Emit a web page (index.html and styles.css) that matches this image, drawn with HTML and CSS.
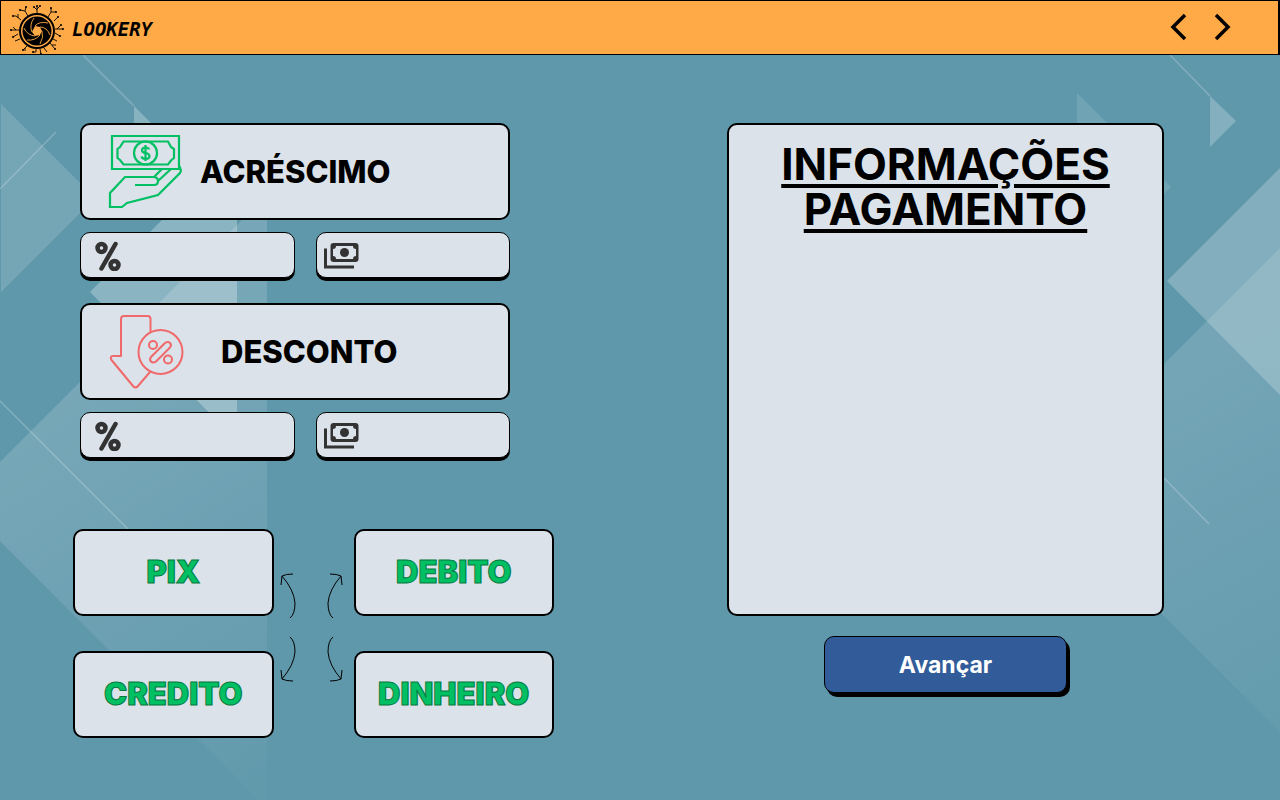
FILE: index.html
```html
<!DOCTYPE html>
<html lang="pt-BR">
<head>
<meta charset="utf-8">
<meta name="viewport" content="width=device-width, initial-scale=1">
<title>Lookery</title>
<link rel="stylesheet" href="styles.css">
</head>
<body>
<svg class="backdrop" viewBox="0 0 1280 800" preserveAspectRatio="none" aria-hidden="true">
  <defs>
    <linearGradient id="fade-left" gradientUnits="userSpaceOnUse" x1="60" y1="400" x2="290" y2="760"><stop offset="0" stop-color="#fff" stop-opacity=".15"/><stop offset="1" stop-color="#fff" stop-opacity=".02"/></linearGradient>
    <linearGradient id="fade-right" gradientUnits="userSpaceOnUse" x1="1160" y1="370" x2="1340" y2="700"><stop offset="0" stop-color="#fff" stop-opacity=".13"/><stop offset="1" stop-color="#fff" stop-opacity=".03"/></linearGradient>
  </defs>
  <g fill="#fff">
    <path d="M1 104 95 198 1 292Z" fill-opacity=".14"/>
    <path d="M134 106 158 130 134 154Z" fill-opacity=".25"/>
    <path d="M90 292 237 145V441Z" fill-opacity=".28"/>
    <path d="M0 462 267 195V800H259L0 541Z" fill="url(#fade-left)"/>
    <path d="M1077 93 1171 187 1077 281Z" fill-opacity=".11"/>
    <path d="M1210 96 1236 121 1210 147Z" fill-opacity=".23"/>
    <path d="M1167 281 1280 168V395Z" fill-opacity=".22"/>
    <path d="M1280 248 1038 490 1280 732Z" fill="url(#fade-right)"/>
  </g>
  <g stroke="#fff" stroke-opacity=".22" stroke-width="1.5">
    <path d="M83 55 134 106M0 189 56 132M0 401 128 529M1170 55 1210 96M1164 478 1209 524"/>
  </g>
</svg>

<header class="topbar">
  <a class="brand" href="#">
    <svg class="brand-mark" viewBox="0 0 56 52" aria-hidden="true">
      <g fill="none" stroke="#000" stroke-width=".9">
        <path d="M28 10V3M28 7l-3-3M28 6l3-3M19 13l-3-5-5-1M16 8l1-4M12 17 7 13H4M9 15v-4M39 14l3-5V5M42 9h5M45 18l4-4M10 27H2M7 27l-3-3M9 31l-5 3M11 36l-5 2M46 26h8M48 26l4-4M46 30l5 3M44 36l4 2M41 40l5 6M43 42h4M18 43l-4 4M16 45v3M27 46v3h-3M31 46l1 5M35 45l3 4"/>
      </g>
      <g fill="#000">
        <circle cx="28" cy="3" r="1"/><circle cx="25" cy="4" r="1"/><circle cx="31" cy="3" r="1"/><circle cx="11" cy="7" r="1"/><circle cx="17" cy="4" r="1"/><circle cx="4" cy="13" r="1"/><circle cx="42" cy="5" r="1"/><circle cx="47" cy="9" r="1"/><circle cx="49" cy="14" r="1"/><circle cx="2" cy="27" r="1"/><circle cx="4" cy="34" r="1"/><circle cx="54" cy="26" r="1"/><circle cx="52" cy="22" r="1"/><circle cx="51" cy="33" r="1"/><circle cx="46" cy="46" r="1"/><circle cx="24" cy="49" r="1"/><circle cx="32" cy="51" r="1"/><circle cx="14" cy="47" r="1"/>
      </g>
      <circle cx="28" cy="28" r="17" fill="#ffaa46" stroke="#000" stroke-width="2"/>
      <circle cx="28" cy="28" r="14.500"/>
      <path d="M26 23 31 24 33 28 31 32 26 33 23 29Z" fill="#ffaa46"/>
      <path d="M26 23Q30 18 39 20M31 24Q38 24 41 32M33 28Q35 34 31 41M31 32Q26 38 18 37M26 33Q18 32 15 25M23 29Q20 22 25 15" fill="none" stroke="#ffaa46" stroke-width=".9"/>
    </svg>
    <span class="brand-name">LOOKERY</span>
  </a>
  <nav class="history" aria-label="Navegação">
    <button class="history-btn" type="button" aria-label="Voltar"><svg viewBox="0 0 20 28" aria-hidden="true"><path d="M16 2 4 14 16 26"/></svg></button>
    <button class="history-btn" type="button" aria-label="Seguir"><svg viewBox="0 0 20 28" aria-hidden="true"><path d="M4 2 16 14 4 26"/></svg></button>
  </nav>
</header>

<svg class="symbols" aria-hidden="true">
  <symbol id="percent" viewBox="0 0 26 30">
    <g fill="none" stroke="#333"><circle cx="6.500" cy="7" r="4" stroke-width="4.500"/><circle cx="19.500" cy="24" r="4" stroke-width="4.500"/><path d="M20.500 3 6.500 27.500" stroke-width="4.500" stroke-linecap="round"/></g>
  </symbol>
  <symbol id="cash" viewBox="0 0 35 26">
    <path d="M1.500 5.500V24H30" fill="none" stroke="#333" stroke-width="3"/>
    <rect x="6.500" y="0" width="28" height="19" rx="3" fill="#333"/>
    <path d="M12 3h17a3 3 0 0 0 3 3v7a3 3 0 0 0-3 3H12a3 3 0 0 0-3-3V6a3 3 0 0 0 3-3Z" fill="#dbe2e9"/>
    <circle cx="20.500" cy="9.500" r="4.500" fill="#333"/>
  </symbol>
</svg>

<main class="checkout">
  <div class="options">
    <div class="adjustments">
      <section class="adjustment">
        <h2 class="card banner">
          <svg class="banner-icon" viewBox="0 0 76 76" fill="none" stroke="#00c063" stroke-width="2.200" aria-hidden="true">
            <path d="M4 2H71V35H4ZM15.500 7.500H60L63 13 66 15V24L63 26.500 60 30.500H15.500L12 26 9.500 24V15L12 13Z"/>
            <circle cx="37.500" cy="19" r="11.500"/>
            <path d="M41 15.500Q40.500 13.500 37.500 13.500 34 13.500 34 16.200 34 18.500 37.500 19 41.500 19.500 41.500 22.200 41.500 24.800 37.500 24.800 34 24.800 33.500 22.500M37.500 11V27"/>
            <path d="M71 32Q74 36 72 39L50 61 19 69 14 73H2V59L17 43H45Q50 43 50 47 50 51 46 51H27M46 43 54 35M50 47 63 35"/>
          </svg>
          <span class="banner-text">ACRÉSCIMO</span>
        </h2>
        <div class="fields">
          <label class="field"><svg class="percent" role="img" aria-label="Acréscimo em porcentagem"><use href="#percent"/></svg><input type="text" inputmode="decimal"></label>
          <label class="field field-cash"><svg class="cash" role="img" aria-label="Acréscimo em dinheiro"><use href="#cash"/></svg><input type="text" inputmode="decimal"></label>
        </div>
      </section>
      <section class="adjustment">
        <h2 class="card banner banner-discount">
          <svg class="banner-icon" viewBox="0 0 76 76" fill="none" stroke="#f0696b" stroke-width="2" stroke-linejoin="round" aria-hidden="true">
            <path d="M42.500 18V5Q42.500 2 39.500 2H16Q13 2 13 5V42H5Q1.500 42 3.500 46L25 72Q27.500 75 30 72L42 58"/>
            <circle cx="52.500" cy="38" r="22"/>
            <circle cx="45" cy="31" r="4"/><circle cx="60" cy="45.500" r="4"/>
            <path d="M43 43 57 29Q60 27 62 29 64 31 62 33.500L48 47.500Q45 49.500 43 47.500 41 45.500 43 43Z"/>
          </svg>
          <span class="banner-text">DESCONTO</span>
        </h2>
        <div class="fields">
          <label class="field"><svg class="percent" role="img" aria-label="Desconto em porcentagem"><use href="#percent"/></svg><input type="text" inputmode="decimal"></label>
          <label class="field field-cash"><svg class="cash" role="img" aria-label="Desconto em dinheiro"><use href="#cash"/></svg><input type="text" inputmode="decimal"></label>
        </div>
      </section>
    </div>

    <div class="methods">
      <button class="card method" type="button">PIX</button>
      <svg class="arrows" viewBox="0 0 80 112" fill="none" stroke="#000" stroke-width="1" aria-hidden="true">
        <path d="M16 39Q21 35 21 24 20 11 8 -3M7 6 8 -3Q12 -5 19 -5" transform="translate(0 1)"/>
        <path d="M16 39Q21 35 21 24 20 11 8 -3M7 6 8 -3Q12 -5 19 -5" transform="matrix(-1 0 0 1 75 1)"/>
        <path d="M16 39Q21 35 21 24 20 11 8 -3M7 6 8 -3Q12 -5 19 -5" transform="matrix(1 0 0 -1 0 98)"/>
        <path d="M16 39Q21 35 21 24 20 11 8 -3M7 6 8 -3Q12 -5 19 -5" transform="matrix(-1 0 0 -1 75 98)"/>
      </svg>
      <button class="card method" type="button">DEBITO</button>
      <button class="card method" type="button">CREDITO</button>
      <button class="card method" type="button">DINHEIRO</button>
    </div>
  </div>

  <div class="summary">
    <section class="card info">
      <h1 class="info-title">INFORMAÇÕES PAGAMENTO</h1>
    </section>
    <button class="next" type="button">Avançar</button>
  </div>
</main>
</body>
</html>
```

FILE: styles.css
```css
* {
  box-sizing: border-box;
}

body {
  margin: 0;
  min-height: 100vh;
  position: relative;
  background: #5f98ab;
  color: #000;
  font-family: Inter, "Liberation Sans", sans-serif;
}

.backdrop {
  position: absolute;
  inset: 0;
  z-index: -1;
  width: 100%;
  height: 100%;
}

.symbols {
  position: absolute;
  width: 0;
  height: 0;
}

button {
  margin: 0;
  font-family: inherit;
  color: inherit;
  cursor: pointer;
}

.topbar {
  display: flex;
  align-items: center;
  justify-content: space-between;
  height: 55px;
  padding: 2px 42px 0 8px;
  background: #ffaa46;
  border: 1px solid #000;
  border-right-width: 2px;
}

.brand {
  display: flex;
  align-items: center;
  gap: 7px;
  color: #000;
  text-decoration: none;
}

.brand-mark {
  width: 56px;
  height: 52px;
}

.brand-name {
  font: italic 700 19px/24px "DejaVu Sans Mono", monospace;
}

.history {
  display: flex;
  gap: 15px;
}

.history-btn {
  width: 28px;
  height: 32px;
  padding: 0;
  background: none;
  border: 0;
}

.history-btn svg {
  width: 20px;
  height: 28px;
  fill: none;
  stroke: #000;
  stroke-width: 3.5;
}

.checkout {
  display: grid;
  grid-template-columns: minmax(0, 481fr) minmax(0, 437fr);
  gap: 173px;
  align-items: start;
  padding: 68px 116px 40px 73px;
}

.card {
  margin: 0;
  background: #dbe2e9;
  border: 2px solid #000;
  border-radius: 10px;
}

.adjustments {
  display: grid;
  gap: 22px;
  padding: 0 44px 0 7px;
}

.adjustment {
  display: grid;
  gap: 12px;
}

.banner {
  display: flex;
  align-items: center;
  gap: 16px;
  height: 97px;
  padding: 0 26px;
}

.banner-discount {
  gap: 37px;
}

.banner-icon {
  flex: none;
  width: 76px;
  height: 76px;
}

.banner-text {
  font-size: 31px;
  font-weight: 800;
  line-height: 40px;
}

.fields {
  display: grid;
  grid-template-columns: minmax(0, 215fr) minmax(0, 194fr);
  gap: 21px;
}

.field {
  display: flex;
  align-items: center;
  gap: 8px;
  height: 46px;
  margin-bottom: 3px;
  padding: 2px 14px 0;
  background: #dbe2e9;
  border: 1px solid #000;
  border-radius: 10px;
  box-shadow: 0 3px 0 #000;
}

.field-cash {
  padding: 2px 7px 0;
}

.field input {
  flex: 1;
  min-width: 0;
  height: 32px;
  padding: 0;
  background: none;
  border: 0;
  font: 500 18px/24px Inter, sans-serif;
}

.percent {
  flex: none;
  width: 26px;
  height: 30px;
}

.cash {
  flex: none;
  width: 35px;
  height: 26px;
}

.methods {
  display: grid;
  grid-template-columns: minmax(0, 1fr) 80px minmax(0, 1fr);
  row-gap: 35px;
  margin-top: 68px;
}

.method {
  height: 87px;
  padding: 0 0 2px;
  color: #00c063;
  font-size: 31px;
  font-weight: 900;
  line-height: 40px;
  -webkit-text-stroke: 1px #08783f;
}

.arrows {
  grid-row: 1 / span 2;
  grid-column: 2;
  align-self: center;
  width: 80px;
  height: 112px;
  overflow: visible;
}

.summary {
  display: grid;
  justify-items: center;
  gap: 20px;
}

.info {
  width: 100%;
  min-height: 493px;
  padding: 17px 40px;
}

.info-title {
  margin: 0;
  font-size: 44px;
  font-weight: 700;
  line-height: 45px;
  text-align: center;
  text-decoration: underline 4px;
  text-underline-offset: 4px;
}

.next {
  width: 243px;
  height: 57px;
  background: #315c99;
  border: 1px solid #000;
  border-radius: 10px;
  box-shadow: 3px 4px 0 #000;
  color: #fff;
  font-size: 23px;
  font-weight: 700;
}
```
